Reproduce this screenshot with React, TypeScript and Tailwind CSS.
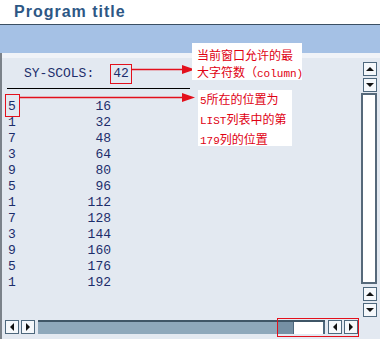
import React from 'react';

const rows: [number, number][] = [
  [5, 16], [1, 32], [7, 48], [3, 64], [9, 80], [5, 96],
  [1, 112], [7, 128], [3, 144], [9, 160], [5, 176], [1, 192],
];

type Dir = 'up' | 'down' | 'left' | 'right';

const Arrow: React.FC<{ dir: Dir }> = ({ dir }) => {
  const pts: Record<Dir, string> = {
    up: '0,5 4,1 8,5',
    down: '0,1 4,5 8,1',
    left: '5,0 1,4 5,8',
    right: '1,0 5,4 1,8',
  };
  const vertical = dir === 'up' || dir === 'down';
  return (
    <svg width={vertical ? 8 : 6} height={vertical ? 6 : 8} viewBox={vertical ? '0 0 8 6' : '0 0 6 8'}>
      <polygon points={pts[dir]} fill="#111" />
    </svg>
  );
};

const ScrollBtn: React.FC<{ dir: Dir }> = ({ dir }) => (
  <div className="w-[14px] h-[14px] shrink-0 flex items-center justify-center bg-[#f5f8fb] border border-[#4e687d]">
    <Arrow dir={dir} />
  </div>
);

const Sm: React.FC<{ children: React.ReactNode }> = ({ children }) => (
  <span className="font-['Liberation_Mono',monospace] text-[11px]">{children}</span>
);

export default function App() {
  return (
    <div className="relative w-[380px] h-[339px] bg-white flex flex-col overflow-hidden font-['Liberation_Sans',sans-serif]">
      <div className="h-[24px] pl-[14px] flex items-center text-[16px] font-bold tracking-[1px] text-[#2d5785]">
        Program title
      </div>
      <div className="h-px bg-[#3b4f63]" />
      <div className="h-[28px] bg-[#a5c1e5]" />
      <div className="flex-1 flex flex-col border-l-2 border-[#7b828a] bg-[#e3e9f1]">
        <div className="h-[5px] bg-[#f0f3f8]" />
        <div className="h-[260px] flex">
          <div className="flex-1 flex flex-col font-['Liberation_Mono',monospace] text-[13px] text-[#1c2d6b]">
            <div className="h-[20px] mt-[6px] pl-[22px] flex items-center">
              <span>SY-SCOLS:</span>
              <span className="ml-[16px] h-[20px] px-[2px] flex items-center border border-[#e3101c]">42</span>
            </div>
            <div className="mt-[4px] ml-[5px] w-[183px] h-px bg-black" />
            <div className="mt-[10px] flex flex-col">
              {rows.map(([a, b], i) => (
                <div key={i} className="w-[109px] h-[16px] leading-[16px] pl-[6px] flex justify-between">
                  <span>{a}</span>
                  <span>{b}</span>
                </div>
              ))}
            </div>
          </div>
          <div className="w-[16px] mr-[3px] flex flex-col items-end">
            <div className="mt-[4px]"><ScrollBtn dir="up" /></div>
            <div className="mt-[2px]"><ScrollBtn dir="down" /></div>
            <div className="mt-[1px] w-[16px] flex-1 bg-white border-2 border-[#56697a]" />
            <div className="mt-[3px]"><ScrollBtn dir="up" /></div>
            <div className="mt-[2px] mb-[1px]"><ScrollBtn dir="down" /></div>
          </div>
        </div>
        <div className="mt-[2px] h-[14px] pl-[3px] pr-[22px] flex">
          <ScrollBtn dir="left" />
          <div className="ml-[2px]"><ScrollBtn dir="right" /></div>
          <div className="ml-[3px] flex-1 flex border-t-2 border-[#3f5667]">
            <div className="flex-1 bg-[#8ea8bb]" />
            <div className="w-[15px] bg-[#7690a4]" />
            <div className="w-[32px] bg-white border-r-2 border-l border-[#4e687d]" />
          </div>
          <div className="ml-[3px]"><ScrollBtn dir="left" /></div>
          <div className="ml-[2px]"><ScrollBtn dir="right" /></div>
        </div>
        <div className="h-[5px]" />
      </div>

      {/* callouts */}
      <svg className="absolute left-0 top-0 pointer-events-none" width="380" height="339">
        <line x1="131" y1="69.5" x2="185" y2="69.5" stroke="#e3101c" strokeWidth="1.5" />
        <polygon points="182,65 195,69.5 182,74" fill="#e3101c" />
        <line x1="20" y1="97.5" x2="185" y2="97.5" stroke="#e3101c" strokeWidth="1.5" />
        <polygon points="182,93 195,97.5 182,102" fill="#e3101c" />
      </svg>
      <div className="absolute left-[5px] top-[94px] w-[15px] h-[23px] border border-[#e3101c]" />
      <div className="absolute left-[277px] top-[318px] w-[82px] h-[19px] border border-[#e3101c]" />
      <div className="absolute left-[192px] top-[43px] w-[110px] h-[37px] bg-white pl-[5px] pt-[3px] text-[12px] leading-[17px] text-[#e00012] font-['Noto_Sans_CJK_SC',sans-serif] whitespace-nowrap">
        <div>当前窗口允许的最</div>
        <div>大字符数（<Sm>column)</Sm></div>
      </div>
      <div className="absolute left-[198px] top-[90px] w-[94px] h-[56px] bg-white pl-[2px] text-[12px] leading-[17px] text-[#e00012] font-['Noto_Sans_CJK_SC',sans-serif] whitespace-nowrap">
        <div><Sm>5</Sm>所在的位置为</div>
        <div><Sm>LIST</Sm>列表中的第</div>
        <div><Sm>179</Sm>列的位置</div>
      </div>
    </div>
  );
}
